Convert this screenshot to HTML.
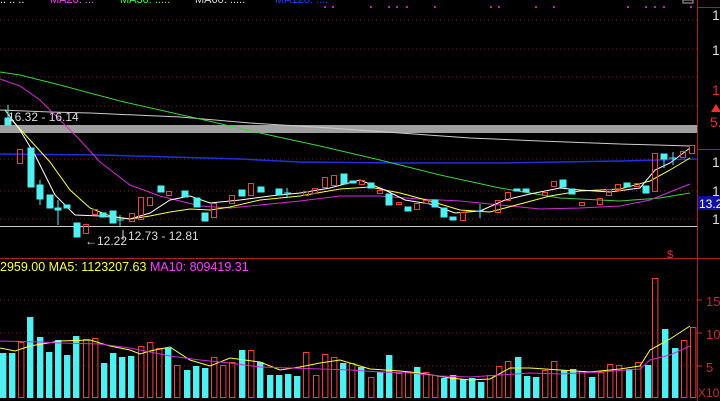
<!DOCTYPE html>
<html><head><meta charset="utf-8"><style>
html,body{margin:0;padding:0;background:#000;overflow:hidden}
svg{display:block}
text{font-family:"Liberation Sans",sans-serif}
</style></head><body>
<svg width="720" height="401" viewBox="0 0 720 401" xmlns="http://www.w3.org/2000/svg">
<rect width="720" height="401" fill="#000"/>
<g stroke="#802020" stroke-width="1" stroke-dasharray="1,3">
<line x1="0" y1="20" x2="697" y2="20"/><line x1="0" y1="49" x2="697" y2="49"/>
<line x1="0" y1="77" x2="697" y2="77"/><line x1="0" y1="106" x2="697" y2="106"/>
<line x1="0" y1="159" x2="697" y2="159"/><line x1="0" y1="191" x2="697" y2="191"/>
<line x1="0" y1="219" x2="697" y2="219"/>
<line x1="0" y1="300" x2="697" y2="300"/><line x1="0" y1="333" x2="697" y2="333"/><line x1="0" y1="366" x2="697" y2="366"/>
</g>
<text x="0" y="3" font-size="11" fill="#ffff60">.. .. ..</text>
<text x="50" y="3" font-size="11" fill="#ff40ff">MA20: ...</text>
<text x="120" y="3" font-size="11" fill="#40ff40">MA30: .....</text>
<text x="195" y="3" font-size="11" fill="#ddd">MA60: .....</text>
<text x="275" y="3" font-size="11" fill="#2040ff">MA120: ....</text>
<g fill="#c020c0"><rect x="324" y="6" width="2" height="2"/><rect x="332" y="6" width="2" height="2"/><rect x="370" y="6" width="2" height="2"/><rect x="388" y="6" width="2" height="2"/><rect x="396" y="6" width="2" height="2"/><rect x="406" y="6" width="2" height="2"/><rect x="434" y="6" width="2" height="2"/><rect x="490" y="6" width="2" height="2"/><rect x="498" y="6" width="2" height="2"/><rect x="535" y="6" width="2" height="2"/><rect x="553" y="6" width="2" height="2"/><rect x="627" y="6" width="2" height="2"/><rect x="645" y="6" width="2" height="2"/><rect x="654" y="6" width="2" height="2"/><rect x="663" y="6" width="2" height="2"/><rect x="690" y="6" width="2" height="2"/></g>
<rect x="683" y="0" width="10" height="3" fill="none" stroke="#aaa"/>
<rect x="0" y="125" width="697" height="8" fill="#a0a0a0"/>
<line x1="0" y1="226.5" x2="697" y2="226.5" stroke="#ccc"/>
<polyline fill="none" stroke="#2030e0" stroke-width="1.5" points="0,154 100,155 240,159 300,162 400,163 500,163 560,162 620,161 697,159"/>
<polyline fill="none" stroke="#ccc" stroke-width="1" points="0,110 50,112 90,113 180,117 250,123 330,128 400,133 470,138 540,141 620,144 690,146"/>
<polyline fill="none" stroke="#40d040" stroke-width="1" points="0,72 20,75 60,85 120,101 200,119 260,133 320,146 380,160 440,175 500,188 560,198 620,201 660,198 690,193"/>
<polyline fill="none" stroke="#d030d0" stroke-width="1" points="0,79 20,86 40,100 60,120 80,140 100,162 130,185 160,196 200,206 230,208 260,205 300,201 340,196 380,196 420,199 460,201 500,205 540,209 580,208 620,206 650,200 670,192 690,184"/>
<polyline fill="none" stroke="#ffff40" stroke-width="1" points="10,118 30,140 50,162 70,190 90,208 110,216 130,219 150,216 170,212 190,209 210,210 230,207 260,200 300,196 340,189 370,187 400,193 430,201 460,210 490,212 520,204 550,196 580,191 620,189 650,181 670,170 690,158"/>
<polyline fill="none" stroke="#ffffff" stroke-width="1" points="5,110 20,130 35,155 55,195 75,215 100,216 130,219 150,213 170,200 190,196 210,203 240,200 270,196 300,193 330,188 360,180 385,190 405,200 430,204 455,213 480,211 505,200 530,194 560,188 580,190 610,192 640,188 655,170 670,163 690,148"/>
<g stroke-width="1">
<g fill="#50f0f0" stroke="#50f0f0">
<line x1="8" y1="105" x2="8" y2="125"/><rect x="5" y="118" width="6" height="7"/>
<rect x="28" y="148" width="6" height="39"/>
<rect x="37" y="185" width="6" height="14"/><line x1="40" y1="180" x2="40" y2="205"/>
<rect x="47" y="195" width="6" height="13"/>
<line x1="58" y1="200" x2="58" y2="225"/><rect x="55" y="208" width="6" height="2"/>
<rect x="64" y="205" width="6" height="3"/>
<rect x="74" y="223" width="6" height="14"/>
<rect x="100" y="213" width="6" height="4"/>
<rect x="110" y="211" width="6" height="12"/><line x1="120" y1="215" x2="120" y2="226"/><line x1="117" y1="220" x2="124" y2="220"/>
<rect x="158" y="186" width="6" height="6"/>
<rect x="182" y="191" width="6" height="6"/>
<rect x="194" y="198" width="6" height="9"/>
<rect x="202" y="213" width="6" height="8"/>
<rect x="239" y="190" width="6" height="6"/>
<rect x="258" y="187" width="6" height="5"/>
<rect x="276" y="189" width="6" height="6"/>
<line x1="287" y1="188" x2="287" y2="198"/><line x1="284" y1="193" x2="291" y2="193"/>
<rect x="341" y="174" width="6" height="10"/>
<rect x="350" y="181" width="6" height="2"/>
<rect x="368" y="183" width="6" height="5"/>
<rect x="386" y="194" width="6" height="11"/>
<rect x="405" y="207" width="6" height="4"/>
<rect x="432" y="200" width="6" height="7"/>
<rect x="441" y="208" width="6" height="9"/>
<rect x="450" y="217" width="6" height="3"/>
<line x1="480" y1="204" x2="480" y2="218"/><line x1="476" y1="211" x2="484" y2="211"/>
<rect x="514" y="189" width="6" height="2"/>
<rect x="523" y="189" width="6" height="3"/>
<rect x="560" y="180" width="6" height="7"/>
<rect x="569" y="189" width="6" height="5"/>
<rect x="624" y="183" width="6" height="4"/>
<rect x="643" y="186" width="6" height="7"/>
<rect x="661" y="154" width="6" height="5"/><line x1="664" y1="154" x2="664" y2="168"/>
<line x1="673" y1="152" x2="673" y2="165"/><line x1="669" y1="158" x2="677" y2="158"/>
</g>
<g fill="none" stroke="#f04040">
<rect x="17.5" y="149.5" width="5" height="14"/>
<rect x="83.5" y="224.5" width="5" height="9"/>
<rect x="92.5" y="209.5" width="5" height="5"/>
<rect x="129.5" y="213.5" width="5" height="8"/>
<rect x="138.5" y="197.5" width="5" height="22"/>
<rect x="147.5" y="197.5" width="5" height="8"/>
<rect x="166.5" y="191.5" width="5" height="4"/>
<rect x="211.5" y="203.5" width="5" height="14"/>
<rect x="229.5" y="195.5" width="5" height="8"/>
<rect x="248.5" y="183.5" width="5" height="12"/>
<rect x="303.5" y="191.5" width="5" height="4"/>
<rect x="312.5" y="188.5" width="5" height="5"/>
<rect x="322.5" y="177.5" width="5" height="10"/>
<rect x="331.5" y="175.5" width="5" height="10"/>
<rect x="359.5" y="180.5" width="5" height="4"/>
<rect x="377.5" y="190.5" width="5" height="3"/>
<rect x="396.5" y="202.5" width="5" height="2"/>
<rect x="414.5" y="203.5" width="5" height="6"/>
<rect x="423.5" y="200.5" width="5" height="3"/>
<rect x="460.5" y="212.5" width="5" height="8"/>
<rect x="495.5" y="200.5" width="5" height="12"/>
<rect x="505.5" y="192.5" width="5" height="8"/>
<rect x="542.5" y="192.5" width="5" height="3"/>
<rect x="551.5" y="181.5" width="5" height="5"/>
<rect x="579.5" y="202.5" width="5" height="3"/>
<rect x="597.5" y="198.5" width="5" height="6"/>
<rect x="606.5" y="189.5" width="5" height="6"/>
<rect x="615.5" y="184.5" width="5" height="6"/>
<rect x="634.5" y="183.5" width="5" height="3"/>
<rect x="652.5" y="153.5" width="5" height="38"/>
<rect x="680.5" y="151.5" width="5" height="6"/>
<rect x="689.5" y="145.5" width="5" height="8"/>
</g>
</g>
<text x="8" y="121" font-size="12" fill="#ddd">16.32 - 16.14</text>
<text x="85" y="245" font-size="12" fill="#ddd">←12.22</text>
<text x="128" y="240" font-size="12" fill="#ddd">12.73 - 12.81</text>
<line x1="123" y1="230" x2="123" y2="240" stroke="#ddd"/>
<text x="667" y="258" font-size="11" fill="#f03030">$</text>
<line x1="0" y1="258.5" x2="720" y2="258.5" stroke="#b02020"/>
<text x="0" y="271" font-size="12.5" fill="#ffff40">2959.00  MA5: 1123207.63</text>
<text x="150" y="271" font-size="12.5" fill="#ff40ff">MA10: 809419.31</text>
<g fill="#50f0f0">
<rect x="0" y="353" width="6.4" height="45"/><rect x="9" y="353" width="6.4" height="45"/>
<rect x="27" y="317" width="6.4" height="81"/><rect x="37" y="337" width="6.4" height="61"/>
<rect x="46" y="352" width="6.4" height="46"/><rect x="55" y="340" width="6.4" height="58"/>
<rect x="64" y="355" width="6.4" height="43"/><rect x="73" y="336" width="6.4" height="62"/>
<rect x="101" y="363" width="6.4" height="35"/><rect x="110" y="353" width="6.4" height="45"/>
<rect x="119" y="357" width="6.4" height="41"/><rect x="128" y="356" width="6.4" height="42"/>
<rect x="165" y="348" width="6.4" height="50"/><rect x="184" y="370" width="6.4" height="28"/>
<rect x="193" y="366" width="6.4" height="32"/><rect x="202" y="368" width="6.4" height="30"/>
<rect x="239" y="350" width="6.4" height="48"/><rect x="257" y="362" width="6.4" height="36"/>
<rect x="267" y="375" width="6.4" height="23"/><rect x="276" y="375" width="6.4" height="23"/>
<rect x="285" y="374" width="6.4" height="24"/><rect x="294" y="376" width="6.4" height="22"/>
<rect x="340" y="363" width="6.4" height="35"/><rect x="358" y="367" width="6.4" height="31"/>
<rect x="377" y="372" width="6.4" height="26"/><rect x="386" y="355" width="6.4" height="43"/>
<rect x="414" y="367" width="6.4" height="31"/><rect x="441" y="378" width="6.4" height="20"/>
<rect x="450" y="375" width="6.4" height="23"/><rect x="460" y="379" width="6.4" height="19"/>
<rect x="469" y="378" width="6.4" height="20"/><rect x="478" y="382" width="6.4" height="16"/>
<rect x="515" y="357" width="6.4" height="41"/><rect x="524" y="376" width="6.4" height="22"/>
<rect x="533" y="377" width="6.4" height="21"/><rect x="561" y="370" width="6.4" height="28"/>
<rect x="570" y="369" width="6.4" height="29"/><rect x="589" y="377" width="6.4" height="21"/>
<rect x="626" y="369" width="6.4" height="29"/><rect x="645" y="365" width="6.4" height="33"/>
<rect x="662" y="329" width="6.4" height="69"/><rect x="672" y="348" width="6.4" height="50"/>
</g>
<g fill="none" stroke="#f04040">
<rect x="18.5" y="342.5" width="5.4" height="55"/>
<rect x="83.5" y="339.5" width="5.4" height="58"/><rect x="92.5" y="338.5" width="5.4" height="59"/>
<rect x="138.5" y="346.5" width="5.4" height="51"/><rect x="147.5" y="342.5" width="5.4" height="55"/>
<rect x="156.5" y="348.5" width="5.4" height="49"/><rect x="174.5" y="365.5" width="5.4" height="32"/>
<rect x="211.5" y="357.5" width="5.4" height="40"/><rect x="220.5" y="365.5" width="5.4" height="32"/>
<rect x="229.5" y="362.5" width="5.4" height="35"/><rect x="248.5" y="350.5" width="5.4" height="47"/>
<rect x="303.5" y="352.5" width="5.4" height="45"/><rect x="313.5" y="375.5" width="5.4" height="22"/>
<rect x="322.5" y="354.5" width="5.4" height="43"/><rect x="331.5" y="357.5" width="5.4" height="40"/>
<rect x="349.5" y="363.5" width="5.4" height="34"/><rect x="368.5" y="377.5" width="5.4" height="20"/>
<rect x="396.5" y="373.5" width="5.4" height="24"/><rect x="405.5" y="372.5" width="5.4" height="25"/>
<rect x="423.5" y="372.5" width="5.4" height="25"/><rect x="432.5" y="375.5" width="5.4" height="22"/>
<rect x="487.5" y="375.5" width="5.4" height="22"/><rect x="496.5" y="366.5" width="5.4" height="31"/>
<rect x="505.5" y="361.5" width="5.4" height="36"/><rect x="542.5" y="370.5" width="5.4" height="27"/>
<rect x="551.5" y="361.5" width="5.4" height="36"/><rect x="579.5" y="371.5" width="5.4" height="26"/>
<rect x="598.5" y="372.5" width="5.4" height="25"/><rect x="607.5" y="364.5" width="5.4" height="33"/>
<rect x="616.5" y="365.5" width="5.4" height="32"/><rect x="635.5" y="362.5" width="5.4" height="35"/>
<rect x="652.5" y="278.5" width="5.4" height="119"/><rect x="681.5" y="340.5" width="5.4" height="57"/>
<rect x="690.5" y="327.5" width="5.4" height="70"/>
</g>
<polyline fill="none" stroke="#ffff40" points="0,348 15,351 30,346 60,341 90,340 110,346 130,350 140,354 150,351 170,347 190,360 210,366 230,358 260,362 280,370 300,367 320,363 340,360 370,369 400,371 420,373 450,378 470,380 490,379 510,368 530,368 560,370 590,372 620,369 640,366 650,350 670,339 690,326"/>
<polyline fill="none" stroke="#d030d0" points="0,341 40,342 60,343 100,344 130,348 150,352 170,356 200,360 230,363 260,367 290,368 320,369 350,370 380,372 410,373 440,376 470,377 500,375 530,373 560,374 600,372 640,369 650,360 670,355 690,346"/>
<line x1="697.5" y1="0" x2="697.5" y2="401" stroke="#b02020"/>
<line x1="697" y1="7.5" x2="720" y2="7.5" stroke="#b02020"/>
<line x1="697" y1="149.5" x2="720" y2="149.5" stroke="#b02020"/>
<g font-size="14" fill="#ddd">
<text x="712" y="20">1</text><text x="712" y="55">1</text>
<text x="712" y="167">1</text><text x="712" y="196">1</text><text x="712" y="224">1</text>
</g>
<text x="712" y="95" font-size="14" fill="#e03030">1</text>
<polygon points="711,112 716,104 721,112" fill="#f03030"/>
<text x="710" y="127" font-size="14" fill="#e03030">5.</text>
<rect x="698" y="196" width="22" height="14" fill="#1010a0"/>
<text x="699" y="208" font-size="12" fill="#fff">13.2</text>
<g font-size="13" fill="#c03030">
<text x="706" y="306">15</text><text x="706" y="339">10</text><text x="706" y="372">5</text><text x="698" y="397" font-size="12">X10</text>
</g>
<g stroke="#c03030"><line x1="697" y1="300" x2="702" y2="300"/><line x1="697" y1="333" x2="702" y2="333"/><line x1="697" y1="366" x2="702" y2="366"/></g>
</svg>
</body></html>
